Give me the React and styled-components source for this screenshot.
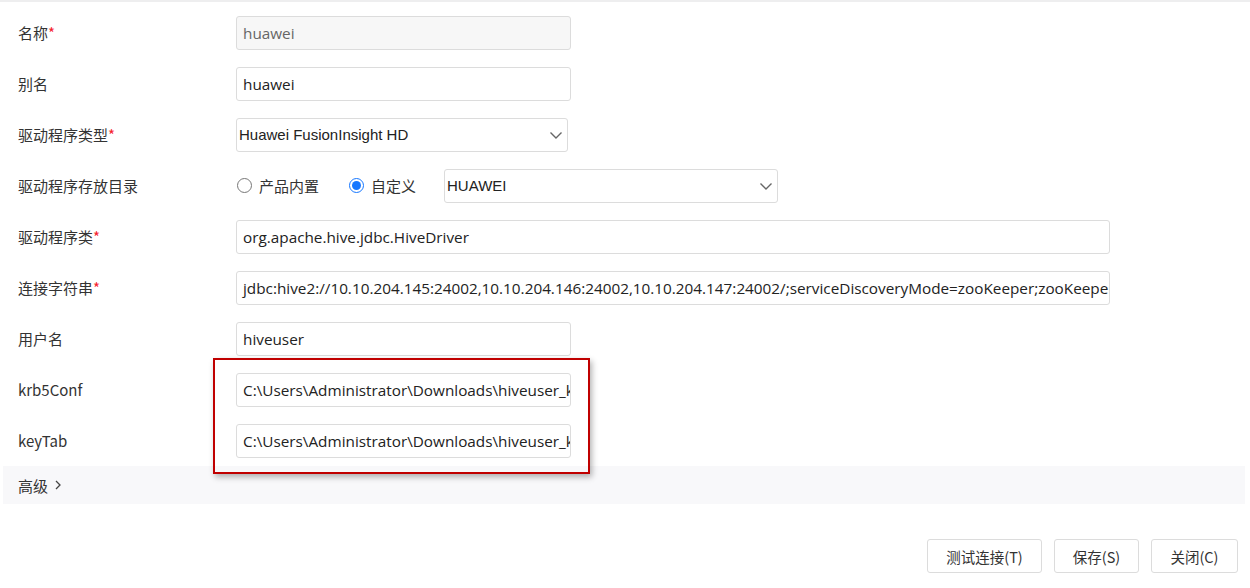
import React from "react";
import styled, { createGlobalStyle } from "styled-components";

const Global = createGlobalStyle`
  html, body { margin: 0; padding: 0; background: #fff; }
  body {
    font-family: "Segoe UI", "Open Sans", "Noto Sans CJK SC", sans-serif;
    color: #333;
  }
`;

const Page = styled.div`
  width: 1250px;
  height: 588px;
  border-top: 2px solid #eeeeef;
  box-sizing: border-box;
  display: flex;
  flex-direction: column;
  overflow: hidden;
`;

const Form = styled.div`
  padding: 5px 0 0 0;
  display: flex;
  flex-direction: column;
`;

const Row = styled.div`
  height: 51px;
  display: flex;
  align-items: center;
`;

const Label = styled.div`
  width: 236px;
  padding-left: 18px;
  box-sizing: border-box;
  font-family: "Noto Sans CJK SC", sans-serif;
  font-size: 15px;
  color: #333;
  flex-shrink: 0;
`;

const Star = styled.span`
  color: #f5222d;
`;

const Input = styled.div`
  width: ${(p) => p.$w || 335}px;
  height: 34px;
  box-sizing: border-box;
  border: 1px solid #dcdcdc;
  border-radius: 3px;
  background: ${(p) => (p.$disabled ? "#f7f7f7" : "#fff")};
  color: ${(p) => (p.$disabled ? "#666" : "#222")};
  padding: 0 6px;
  display: flex;
  align-items: center;
  font-family: "Open Sans", "Noto Sans", sans-serif;
  font-size: 15.3px;
  white-space: nowrap;
  overflow: hidden;
`;

const Select = styled.div`
  width: ${(p) => p.$w || 332}px;
  height: 34px;
  box-sizing: border-box;
  border: 1px solid #dcdcdc;
  border-radius: 3px;
  background: #fff;
  padding: 0 4px 0 2px;
  display: flex;
  align-items: center;
  justify-content: space-between;
  font-family: "Liberation Sans", Arial, sans-serif;
  font-size: 15px;
  color: #222;
`;

const Chevron = () => (
  <svg width="14" height="14" viewBox="0 0 14 14">
    <path d="M1.5 4.5 L7 10 L12.5 4.5" fill="none" stroke="#666" strokeWidth="1.4" />
  </svg>
);

const RadioGroup = styled.div`
  display: flex;
  align-items: center;
`;

const RadioItem = styled.label`
  display: flex;
  align-items: center;
  margin-right: ${(p) => p.$mr || 0}px;
  font-family: "Noto Sans CJK SC", sans-serif;
  font-size: 15px;
  color: #333;
`;

const Circle = styled.span`
  width: 15px;
  height: 15px;
  border-radius: 50%;
  box-sizing: border-box;
  border: 1px solid ${(p) => (p.$on ? "#1677ff" : "#777")};
  margin: 0 7px 0 1px;
  display: flex;
  align-items: center;
  justify-content: center;
  &::after {
    content: "";
    width: 9px;
    height: 9px;
    border-radius: 50%;
    background: ${(p) => (p.$on ? "#1677ff" : "transparent")};
  }
`;

const Highlight = styled.div`
  position: relative;
`;

const RedBox = styled.div`
  position: absolute;
  left: 213px;
  top: -6px;
  width: 377px;
  height: 116px;
  box-sizing: border-box;
  border: 2px solid #c00000;
  box-shadow: 2px 3px 6px rgba(0, 0, 0, 0.3);
  pointer-events: none;
  z-index: 2;
`;

const Advanced = styled.div`
  margin: 0 5px 0 3px;
  height: 38px;
  background: #f8f8fa;
  display: flex;
  align-items: center;
  padding-left: 15px;
  font-family: "Noto Sans CJK SC", sans-serif;
  font-size: 15px;
  color: #333;
  gap: 5px;
`;

const Footer = styled.div`
  margin-top: 35px;
  padding-right: 12px;
  display: flex;
  justify-content: flex-end;
  gap: 12px;
`;

const Button = styled.button`
  width: ${(p) => p.$w}px;
  height: 34px;
  border: 1px solid #dcdcdc;
  border-radius: 3px;
  background: #fff;
  font-family: "Noto Sans CJK SC", sans-serif;
  font-size: 14.5px;
  color: #333;
  padding: 0;
`;

export default function App() {
  return (
    <Page>
      <Global />
      <Form>
        <Row>
          <Label>名称<Star>*</Star></Label>
          <Input $disabled>huawei</Input>
        </Row>
        <Row>
          <Label>别名</Label>
          <Input>huawei</Input>
        </Row>
        <Row>
          <Label>驱动程序类型<Star>*</Star></Label>
          <Select>
            <span>Huawei FusionInsight HD</span>
            <Chevron />
          </Select>
        </Row>
        <Row>
          <Label>驱动程序存放目录</Label>
          <RadioGroup>
            <RadioItem $mr={29}><Circle />产品内置</RadioItem>
            <RadioItem $mr={28}><Circle $on />自定义</RadioItem>
            <Select $w={334}>
              <span>HUAWEI</span>
              <Chevron />
            </Select>
          </RadioGroup>
        </Row>
        <Row>
          <Label>驱动程序类<Star>*</Star></Label>
          <Input $w={874}>org.apache.hive.jdbc.HiveDriver</Input>
        </Row>
        <Row>
          <Label>连接字符串<Star>*</Star></Label>
          <Input $w={874}>
            jdbc:hive2://10.10.204.145:24002,10.10.204.146:24002,10.10.204.147:24002/;serviceDiscoveryMode=zooKeeper;zooKeeperNamespace=hiveserver2
          </Input>
        </Row>
        <Row>
          <Label>用户名</Label>
          <Input>hiveuser</Input>
        </Row>
        <Highlight>
          <RedBox />
          <Row>
            <Label>krb5Conf</Label>
            <Input>C:\Users\Administrator\Downloads\hiveuser_keytab\krb5.conf</Input>
          </Row>
          <Row>
            <Label>keyTab</Label>
            <Input>C:\Users\Administrator\Downloads\hiveuser_keytab\user.keytab</Input>
          </Row>
        </Highlight>
      </Form>
      <Advanced>
        <span>高级</span>
        <svg width="10" height="12" viewBox="0 0 10 12">
          <path d="M3 2 L7 6 L3 10" fill="none" stroke="#444" strokeWidth="1.3" />
        </svg>
      </Advanced>
      <Footer>
        <Button $w={115}>测试连接(T)</Button>
        <Button $w={85}>保存(S)</Button>
        <Button $w={87}>关闭(C)</Button>
      </Footer>
    </Page>
  );
}
